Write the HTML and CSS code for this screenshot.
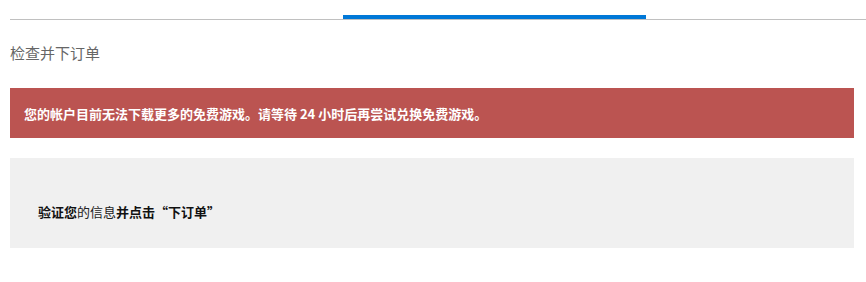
FILE: index.html
```html
<!DOCTYPE html>
<html lang="zh-CN">
<head>
<meta charset="utf-8">
<title>检查并下订单</title>
<link rel="stylesheet" href="styles.css">
</head>
<body>
<div class="page">
  <div class="tabs">
    <div class="tab-active"></div>
  </div>
  <div class="content">
    <h1 class="title">检查并下订单</h1>
    <div class="alert">您的帐户目前无法下载更多的免费游戏。请等待 24 小时后再尝试兑换免费游戏。</div>
    <div class="panel">
      <p class="panel-text"><b>验证您</b>的信息<b>并点击“下订单”</b></p>
    </div>
  </div>
</div>
</body>
</html>
```
FILE: styles.css
```css
html, body {
  margin: 0;
  padding: 0;
  background: #ffffff;
}
body {
  font-family: "Noto Sans CJK SC", "Noto Sans", "Liberation Sans", sans-serif;
}
.page {
  padding-left: 10px;
}
.tabs {
  height: 19px;
  border-bottom: 1px solid #c0c0c0;
  display: flex;
  align-items: flex-end;
}
.tab-active {
  margin-left: 333px;
  width: 303px;
  height: 4px;
  background: #0078d7;
}
.content {
  padding-right: 12px;
}
.title {
  margin: 22px 0 0;
  font-size: 15px;
  line-height: 21px;
  font-weight: 400;
  color: #666666;
}
.alert {
  margin-top: 25px;
  height: 50px;
  display: flex;
  align-items: center;
  padding: 0 14px;
  background: #bb5451;
  color: #ffffff;
  font-size: 13px;
  font-weight: 700;
}
.panel {
  margin-top: 20px;
  height: 90px;
  box-sizing: border-box;
  padding: 44px 28px 0;
  background: #f0f0f0;
}
.panel-text {
  margin: 0;
  font-size: 13px;
  line-height: 20px;
  color: #222222;
}
.panel-text b {
  font-weight: 700;
  color: #111111;
}
```
